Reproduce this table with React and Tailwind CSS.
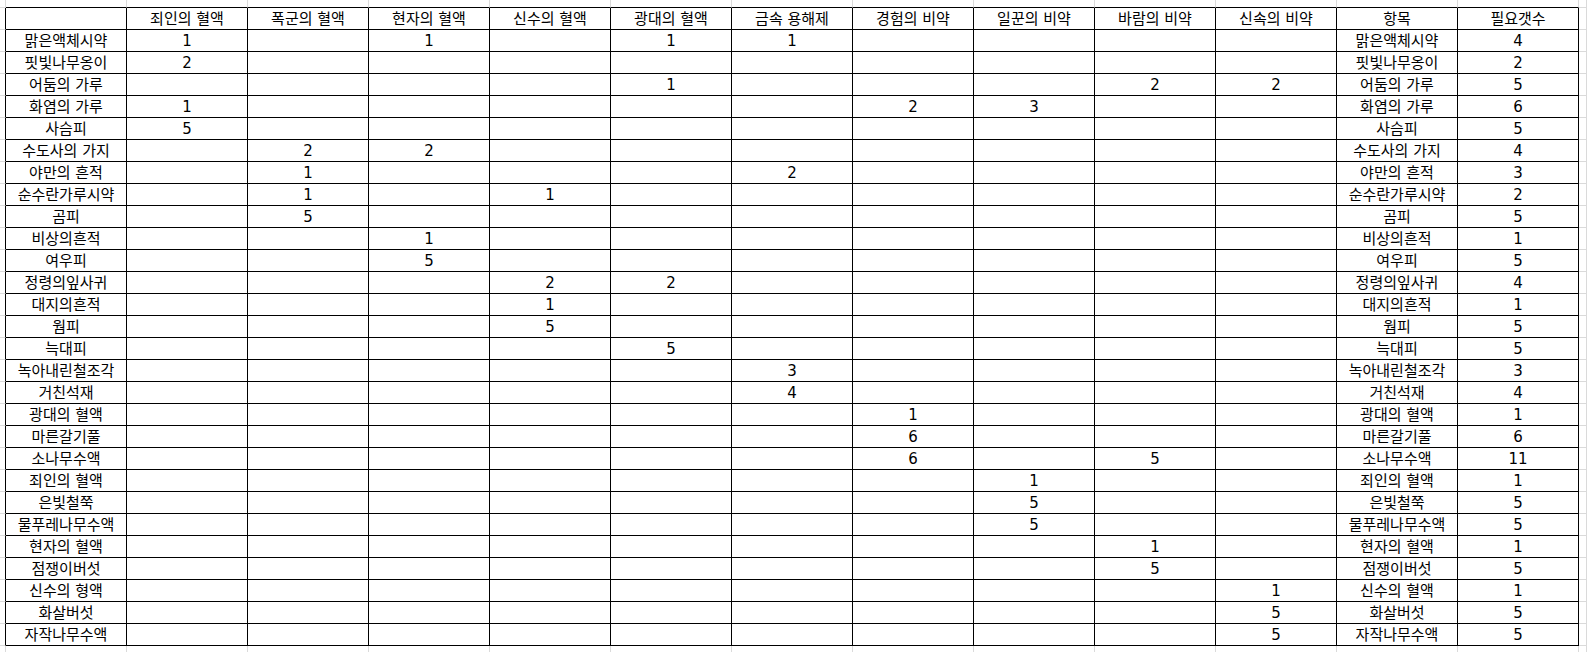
import React from "react";

const headers = [
  "죄인의 혈액",
  "폭군의 혈액",
  "현자의 혈액",
  "신수의 혈액",
  "광대의 혈액",
  "금속 용해제",
  "경험의 비약",
  "일꾼의 비약",
  "바람의 비약",
  "신속의 비약",
  "항목",
  "필요갯수",
];

// [label, {column: amount}, item, total]
const rows = [
  ["맑은액체시약", { 1: 1, 3: 1, 5: 1, 6: 1 }, "맑은액체시약", 4],
  ["핏빛나무옹이", { 1: 2 }, "핏빛나무옹이", 2],
  ["어둠의 가루", { 5: 1, 9: 2, 10: 2 }, "어둠의 가루", 5],
  ["화염의 가루", { 1: 1, 7: 2, 8: 3 }, "화염의 가루", 6],
  ["사슴피", { 1: 5 }, "사슴피", 5],
  ["수도사의 가지", { 2: 2, 3: 2 }, "수도사의 가지", 4],
  ["야만의 흔적", { 2: 1, 6: 2 }, "야만의 흔적", 3],
  ["순수란가루시약", { 2: 1, 4: 1 }, "순수란가루시약", 2],
  ["곰피", { 2: 5 }, "곰피", 5],
  ["비상의흔적", { 3: 1 }, "비상의흔적", 1],
  ["여우피", { 3: 5 }, "여우피", 5],
  ["정령의잎사귀", { 4: 2, 5: 2 }, "정령의잎사귀", 4],
  ["대지의흔적", { 4: 1 }, "대지의흔적", 1],
  ["웜피", { 4: 5 }, "웜피", 5],
  ["늑대피", { 5: 5 }, "늑대피", 5],
  ["녹아내린철조각", { 6: 3 }, "녹아내린철조각", 3],
  ["거친석재", { 6: 4 }, "거친석재", 4],
  ["광대의 혈액", { 7: 1 }, "광대의 혈액", 1],
  ["마른갈기풀", { 7: 6 }, "마른갈기풀", 6],
  ["소나무수액", { 7: 6, 9: 5 }, "소나무수액", 11],
  ["죄인의 혈액", { 8: 1 }, "죄인의 혈액", 1],
  ["은빛철쭉", { 8: 5 }, "은빛철쭉", 5],
  ["물푸레나무수액", { 8: 5 }, "물푸레나무수액", 5],
  ["현자의 혈액", { 9: 1 }, "현자의 혈액", 1],
  ["점쟁이버섯", { 9: 5 }, "점쟁이버섯", 5],
  ["신수의 형액", { 10: 1 }, "신수의 혈액", 1],
  ["화살버섯", { 10: 5 }, "화살버섯", 5],
  ["자작나무수액", { 10: 5 }, "자작나무수액", 5],
];

// full sheet grid: 15 columns x 31 rows (outer ones are the faint spreadsheet gridlines)
const sheet = [];
sheet.push(["", ...headers.map(() => ""), "", ""].slice(0, 15));
sheet.push(["", "", ...headers, ""]);
rows.forEach(([label, vals, item, total]) => {
  const line = ["", label];
  for (let c = 1; c <= 10; c++) line.push(vals[c] ? String(vals[c]) : "");
  line.push(item, String(total), "");
  sheet.push(line);
});
sheet.push(Array(15).fill(""));

const cellClass = (r, c) => {
  const inner = r >= 1 && r <= 29 && c >= 1 && c <= 13;
  if (inner) return "border-r border-b border-black";
  if (r === 0 && c >= 1 && c <= 13) return "border-r border-b border-r-[#dadada] border-b-black";
  if (c === 0 && r >= 1 && r <= 29) return "border-r border-b border-r-black border-b-[#dadada]";
  if (r === 30) return "border-r border-[#dadada]";
  return "border-r border-b border-[#dadada]";
};

export default function App() {
  return (
    <div className="w-[1587px] h-[652px] bg-white overflow-hidden font-['DejaVu_Sans','Noto_Sans_CJK_KR',sans-serif] text-[15px] text-black">
      <div className="grid h-full grid-cols-[6px_repeat(13,121px)_1fr] grid-rows-[8px_repeat(29,22px)_1fr]">
        {sheet.map((line, r) =>
          line.map((text, c) => (
            <div
              key={`${r}-${c}`}
              className={`${cellClass(r, c)} flex items-center justify-center leading-none whitespace-nowrap overflow-hidden pt-[2px]`}
            >
              {text}
            </div>
          ))
        )}
      </div>
    </div>
  );
}
